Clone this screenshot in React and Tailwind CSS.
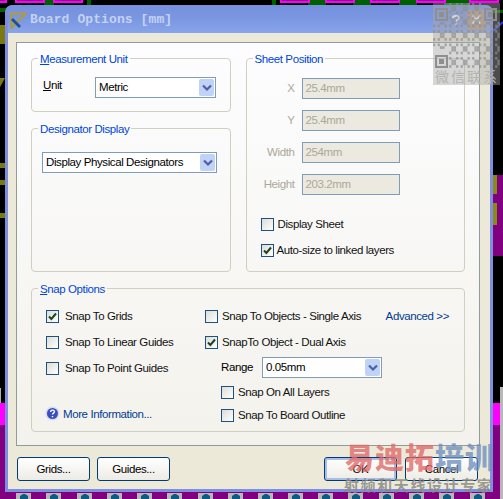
const ui = { fontFamily: '"Liberation Sans", sans-serif' };
const cjk = { fontFamily: '"Noto Sans CJK SC", sans-serif' };

function Arrow() {
  return (
    <span className="flex h-[17px] w-[15px] items-center justify-center rounded-[2px] bg-[#c1d2f7]">
      <svg width="10" height="8" viewBox="0 0 10 8">
        <path d="M1 1.5 5 5.5 9 1.5" fill="none" stroke="#4d5ea8" strokeWidth="2.2" />
      </svg>
    </span>
  );
}

function Select({ value, width }) {
  return (
    <div className={`flex h-[21px] shrink-0 items-center justify-between whitespace-nowrap border border-[#7f9db9] bg-white pl-[3px] pr-[1px] text-black ${width}`}>
      <span className="pb-[2px]">{value}</span>
      <Arrow />
    </div>
  );
}

function Check({ label, checked, gap = "gap-[4px]", className = "" }) {
  return (
    <div className={`flex h-[13px] items-center whitespace-nowrap text-[#111] ${gap} ${className}`}>
      <span className="flex h-[13px] w-[13px] shrink-0 items-center justify-center border border-[#1c5180] bg-gradient-to-br from-[#dcdcd7] to-white">
        {checked && (
          <svg width="9" height="9" viewBox="0 0 9 9">
            <path d="M1 4.5 3.4 7 8 1.5" fill="none" stroke="#21421e" strokeWidth="2" />
          </svg>
        )}
      </span>
      <span className="pb-[2px]">{label}</span>
    </div>
  );
}

function Group({ title, underline, className = "", children }) {
  return (
    <fieldset className={`rounded-[4px] border border-[#d0d0bf] ${className}`}>
      <legend className="ml-[6px] whitespace-nowrap px-[2px] pt-[2px] leading-[14px] text-[#0046d5]">
        {underline ? <u>{underline}</u> : null}
        {title}
      </legend>
      {children}
    </fieldset>
  );
}

function SheetField({ label, value }) {
  return (
    <div className="flex h-[21px] items-center justify-end gap-[7px]">
      <span className="pb-[1px] text-[#aca899]">{label}</span>
      <div className="flex h-[21px] w-[98px] items-center border border-[#7f9db9] bg-[#ebe9e0] pb-[1px] pl-[3px] text-[#aca899]">
        {value}
      </div>
    </div>
  );
}

function Btn({ label, active }) {
  return (
    <button
      className={`h-[24px] w-[73px] rounded-[3px] border border-[#003c74] bg-gradient-to-b from-white to-[#ecebe5] text-black ${
        active ? "shadow-[inset_0_0_0_2px_#a9bde8]" : ""
      }`}
    >
      {label}
    </button>
  );
}

// pcb editor showing round the dialog
function Backdrop() {
  const bottomDots = [16, 46, 77, 107, 137, 167, 198, 228, 258, 288, 318, 348, 379, 409, 439, 470];
  const leftPads = [16, 54];
  const rightPads = [281, 326, 371, 417, 470];
  const greens = [[44, 10], [87, 4], [272, 4], [308, 18], [353, 18], [399, 18], [444, 26]];
  return (
    <svg className="absolute inset-0" width="503" height="499" viewBox="0 0 503 499">
      <rect width="503" height="499" fill="#000" />
      {greens.map(([x, w]) => (
        <rect key={x} x={x} y="0" width={w} height="5" fill="#006000" />
      ))}
      {[...leftPads, ...rightPads].map((x) => (
        <rect key={x} x={x} y="-3" width="28" height="5" fill="#800080" stroke="#ff00ff" strokeWidth="2" />
      ))}
      <rect x="-6" y="-3" width="12" height="5" fill="#800080" stroke="#ff00ff" strokeWidth="2" />
      <rect x="0" y="8" width="6" height="4" fill="#006000" />
      <rect x="0" y="25" width="5" height="19" fill="#7a7a10" />
      <path d="M0 78h5L0 87z" fill="#7a7a10" />
      <rect x="0" y="163" width="5" height="5" fill="#7a7a10" />
      <rect x="0" y="180" width="5" height="5" fill="#7a7a10" />
      <rect x="0" y="213" width="5" height="5" fill="#7a7a10" />
      <rect x="0" y="388" width="1" height="15" fill="#b0b0b0" />
      <rect x="0" y="403" width="5" height="22" fill="#ff00ff" />
      <rect x="0" y="425" width="5" height="74" fill="#800080" />
      <rect x="0" y="492" width="500" height="7" fill="#800080" />
      {bottomDots.map((x) => (
        <g key={x}>
          <rect x={x} y="493" width="15" height="6" fill="#b8b8b8" />
          <path d={`M${x + 4} 499v-3l3-2h2l3 2v3z`} fill="#0f5a80" />
        </g>
      ))}
      <path d="M493 31l10-9" stroke="#2040e0" strokeWidth="2" />
      <rect x="493" y="10" width="10" height="3" fill="#006000" />
      <rect x="493" y="175" width="10" height="81" fill="#800080" />
      <rect x="493" y="175" width="4" height="19" fill="#8a8a10" />
      <rect x="493" y="203" width="4" height="22" fill="#8a8a10" />
      <rect x="493" y="403" width="7" height="22" fill="#ff00ff" />
      <rect x="493" y="425" width="7" height="74" fill="#800080" />
      <rect x="500" y="387" width="3" height="112" fill="#b8b8b8" />
    </svg>
  );
}

// grey qr code pasted on the shot
function QrMark() {
  const cells = [];
  for (let row = 0; row < 24; row++) {
    for (let col = 0; col < 29; col++) {
      const finder = (row < 7 && (col < 7 || col > 21)) || (row > 16 && col < 7);
      if (!finder && (row * 7 + col * 13 + row * col * 3) % 5 < 2) cells.push([col, row]);
    }
  }
  const corners = [[2, 5], [51, 5], [2, 52]];
  return (
    <svg className="absolute inset-0" width="67" height="67" viewBox="0 0 67 67">
      {cells.map(([c, r]) => (
        <rect key={`${c}-${r}`} x={c * 2.3} y={r * 2.7} width="2.3" height="2.7" fill="#8f8f8f" fillOpacity="0.7" />
      ))}
      {corners.map(([x, y]) => (
        <g key={x + y}>
          <rect x={x + 1} y={y + 1} width="11" height="11" fill="none" stroke="#8f8f8f" strokeWidth="2" />
          <rect x={x + 4} y={y + 4} width="5" height="5" fill="#8f8f8f" />
        </g>
      ))}
    </svg>
  );
}

export default function App() {
  return (
    <div className="relative h-[499px] w-[503px] overflow-hidden text-[11.5px] leading-[14px] tracking-[-0.4px]" style={ui}>
      <Backdrop />

      <div className="relative ml-[5px] mt-[5px] flex h-[487px] w-[488px] flex-col rounded-t-[7px] bg-[#7f8fdf] px-[3px] pb-[3px]">
        {/* title bar */}
        <div className="flex h-[28px] shrink-0 items-center rounded-t-[6px] bg-gradient-to-b from-[#7590dc] via-[#7b97e2] to-[#88a4ea] pl-[2px] pr-[4px] pt-[2px]">
          <svg width="17" height="17" viewBox="0 0 17 17">
            <path d="M1 1h15L1 16z" fill="none" stroke="#a59a5c" strokeWidth="3" />
            <path d="M3 6l8 8-2 2-8-8z" fill="#1c4f98" />
          </svg>
          <span
            className="ml-[3px] text-[13px] font-bold tracking-[0.1px] text-[#c4d2f2]"
            style={{ fontFamily: '"Liberation Mono", monospace' }}
          >
            Board Options [mm]
          </span>
          <div className="ml-auto flex items-center gap-[2px]">
            <span className="flex h-[20px] w-[19px] items-center justify-center rounded-[3px] text-[15px] font-bold text-white">?</span>
            <span className="flex h-[20px] w-[19px] items-center justify-center rounded-[3px] bg-[#b09a8c] text-[15px] text-white">✕</span>
          </div>
        </div>

        {/* dialog body */}
        <div className="flex min-h-0 flex-1 flex-col bg-[#ece9d8] pl-[8px] pr-[10px] pt-[9px]">
          <div className="flex h-[404px] shrink-0 flex-col gap-[8px] border border-[#919b9c] bg-gradient-to-b from-[#fdfdff] to-[#f3f2ec] px-[14px] pt-[7px]">
            <div className="flex gap-[15px]">
              <div className="flex w-[200px] flex-col gap-[8px]">
                <Group title="easurement Unit" underline="M" className="h-[62px]">
                  <div className="flex items-center pl-[11px] pt-[11px]">
                    <span className="w-[52px] pb-[5px] text-black"><u>U</u>nit</span>
                    <Select value="Metric" width="w-[121px]" />
                  </div>
                </Group>
                <Group title="Designator Display" className="h-[152px]">
                  <div className="pl-[10px] pt-[16px]">
                    <Select value="Display Physical Designators" width="w-[175px]" />
                  </div>
                </Group>
              </div>

              <Group title="Sheet Position" className="h-[222px] w-[220px]">
                <div className="flex w-[153px] flex-col gap-[11px] pt-[12px]">
                  <SheetField label="X" value="25.4mm" />
                  <SheetField label="Y" value="25.4mm" />
                  <SheetField label="Width" value="254mm" />
                  <SheetField label="Height" value="203.2mm" />
                </div>
                <div className="ml-[14px] mt-[23px] flex flex-col gap-[13px]">
                  <Check label="Display Sheet" />
                  <Check label="Auto-size to linked layers" gap="gap-[3px]" checked />
                </div>
              </Group>
            </div>

            <Group title="nap Options" underline="S" className="h-[152px]">
              <div className="flex pl-[14px] pt-[14px]">
                <div className="flex w-[159px] flex-col gap-[13px]">
                  <Check label="Snap To Grids" gap="gap-[6px]" checked />
                  <Check label="Snap To Linear Guides" gap="gap-[6px]" />
                  <Check label="Snap To Point Guides" gap="gap-[6px]" />
                  <div className="-ml-[1px] mt-[18px] flex h-[15px] items-center gap-[3px] whitespace-nowrap text-[#003c90]">
                    <svg width="15" height="15" viewBox="0 0 15 15">
                      <circle cx="7.5" cy="7.5" r="7" fill="#d5dcf3" />
                      <circle cx="7.5" cy="7.5" r="5.5" fill="#3b50c0" />
                      <path d="M5.6 6c0-2.4 3.8-2.4 3.8-.2 0 1.3-1.9 1.4-1.9 2.8M7.5 10v1.3" fill="none" stroke="#fff" strokeWidth="1.4" />
                    </svg>
                    <span>More Information...</span>
                  </div>
                </div>
                <div className="flex flex-col">
                  <div className="flex h-[13px] w-[244px] items-center justify-between">
                    <Check label="Snap To Objects -  Single Axis" />
                    <span className="whitespace-nowrap pb-[2px] text-[#003c90]">Advanced &gt;&gt;</span>
                  </div>
                  <Check label="SnapTo Object - Dual Axis" checked className="mt-[13px]" />
                  <div className="mt-[8px] flex items-center pl-[16px]">
                    <span className="w-[41px] pb-[2px] text-black">Range</span>
                    <Select value="0.05mm" width="w-[120px]" />
                  </div>
                  <div className="ml-[16px] mt-[8px] flex flex-col gap-[10px]">
                    <Check label="Snap On All Layers" />
                    <Check label="Snap To Board Outline" />
                  </div>
                </div>
              </div>
            </Group>
          </div>

          <div className="mt-[11px] flex pl-[1px] pr-[2px]">
            <div className="flex gap-[7px]">
              <Btn label="Grids..." />
              <Btn label="Guides..." />
            </div>
            <div className="ml-auto flex gap-[8px]">
              <Btn label="OK" active />
              <Btn label="Cancel" />
            </div>
          </div>
        </div>
      </div>

      {/* watermarks over the shot */}
      <div className="absolute left-[433px] top-[3px] flex h-[82px] w-[67px] flex-col justify-end bg-[#a8a8a8]/45 pb-[1px] pl-[2px]">
        <QrMark />
        <span className="whitespace-nowrap text-[14px] leading-[16px] tracking-[2px] text-[#b4b4ac]" style={cjk}>微信联系</span>
      </div>
      <div className="absolute left-[345px] top-[439px] whitespace-nowrap" style={cjk}>
        <div className="text-[29px] font-black leading-[34px] tracking-[1px]">
          <span className="text-[#e06a6a]/80">易迪拓</span>
          <span className="text-[#6f8fc0]/80">培训</span>
        </div>
        <div className="-ml-[1px] mt-[3px] text-[15px] font-bold leading-[18px] tracking-[1.6px] text-[#8a8a84]/85">射频和天线设计专家</div>
      </div>
    </div>
  );
}
